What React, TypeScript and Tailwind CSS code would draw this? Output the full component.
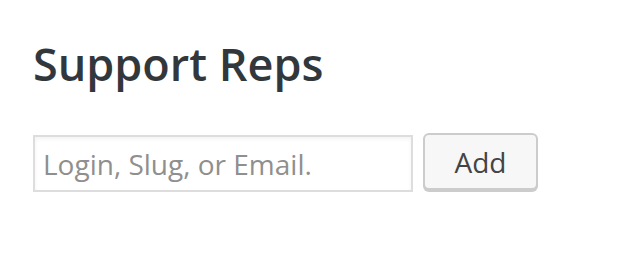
import React from 'react';

export default function App() {
  return (
    <div className="w-[634px] h-[280px] bg-white px-[33px] pt-[34px]" style={{ fontFamily: '"Open Sans", sans-serif' }}>
      <h2 className="text-[45px] leading-[60px] font-semibold text-[#32373c]">Support Reps</h2>
      <div className="flex items-start gap-[10px] mt-[39px]">
        <input
          type="text"
          placeholder="Login, Slug, or Email."
          className="w-[380px] h-[57px] mt-[2px] border-2 border-[#dddddd] px-[8px] text-[28px] text-[#32373c] placeholder:text-[#8f8f8f] outline-none shadow-[inset_0_2px_4px_rgba(0,0,0,0.05)]"
        />
        <button className="w-[115px] h-[57px] rounded-[6px] border-2 border-[#cccccc] bg-[#f7f7f7] text-[28px] text-[#444] shadow-[0_2px_0_#cccccc]">
          Add
        </button>
      </div>
    </div>
  );
}
